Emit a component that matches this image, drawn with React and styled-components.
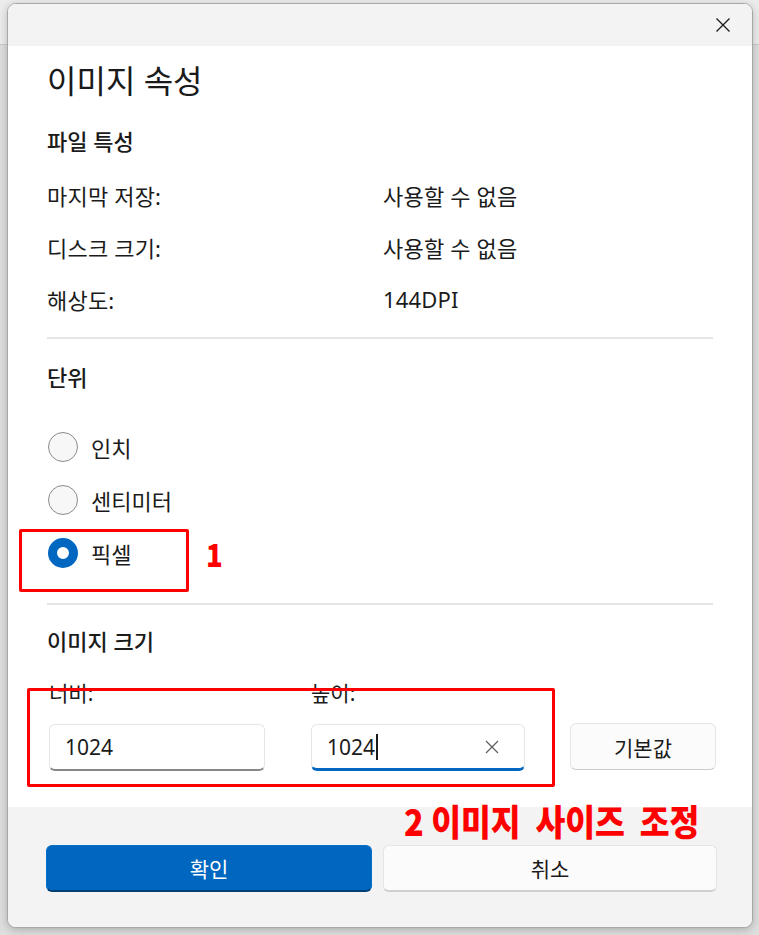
import styled, { createGlobalStyle } from "styled-components";

const GlobalStyle = createGlobalStyle`
  html, body {
    margin: 0;
    padding: 0;
    background: #dedede;
  }
  * {
    box-sizing: border-box;
  }
`;

const App = () => {
  return (
    <Page>
      <GlobalStyle />
      <BackStrip />
      <Dialog>
        <TitleBar>
          <CloseBtn aria-label="닫기">
            <svg width="16" height="16" viewBox="0 0 16 16">
              <path d="M1.5 1.5 L14.5 14.5 M14.5 1.5 L1.5 14.5" stroke="#1a1a1a" strokeWidth="1.3" fill="none" />
            </svg>
          </CloseBtn>
        </TitleBar>
        <Body>
          <Title>이미지 속성</Title>
          <SectionTitle>파일 특성</SectionTitle>
          <InfoList>
            <InfoRow>
              <div>마지막 저장:</div>
              <div>사용할 수 없음</div>
            </InfoRow>
            <InfoRow>
              <div>디스크 크기:</div>
              <div>사용할 수 없음</div>
            </InfoRow>
            <InfoRow>
              <div>해상도:</div>
              <div>144DPI</div>
            </InfoRow>
          </InfoList>
          <Divider />
          <SectionTitle $top={18}>단위</SectionTitle>
          <RadioGroup>
            <RadioRow>
              <Radio />
              <span>인치</span>
            </RadioRow>
            <RadioRow>
              <Radio />
              <span>센티미터</span>
            </RadioRow>
            <RadioRow>
              <Radio $checked />
              <span>픽셀</span>
            </RadioRow>
          </RadioGroup>
          <Divider $top={24} />
          <SectionTitle $top={16}>이미지 크기</SectionTitle>
          <SizeGrid>
            <Field>
              <FieldLabel>너비:</FieldLabel>
              <TextBox>
                <span>1024</span>
              </TextBox>
            </Field>
            <Field>
              <FieldLabel>높이:</FieldLabel>
              <TextBox $focused>
                <span>1024</span>
                <Caret />
                <ClearIcon>
                  <svg width="14" height="14" viewBox="0 0 14 14">
                    <path d="M1 1 L13 13 M13 1 L1 13" stroke="#5c5c5c" strokeWidth="1.2" fill="none" />
                  </svg>
                </ClearIcon>
              </TextBox>
            </Field>
            <DefaultBtn>기본값</DefaultBtn>
          </SizeGrid>
        </Body>
        <Footer>
          <PrimaryBtn>확인</PrimaryBtn>
          <SecondaryBtn>취소</SecondaryBtn>
        </Footer>
      </Dialog>

      <MarkBox $x={19} $y={529} $w={170} $h={63} />
      <MarkText $x={206} $y={530}>1</MarkText>
      <MarkBox $x={27} $y={688} $w={528} $h={99} />
      <MarkText $x={404} $y={797} $squeeze>2 이미지&nbsp;&nbsp;사이즈&nbsp;&nbsp;조정</MarkText>
    </Page>
  );
};

export default App;

const Page = styled.div`
  position: relative;
  width: 759px;
  height: 935px;
  padding: 3px 6px 0 7px;
  font-family: "Noto Sans", "Noto Sans CJK KR", sans-serif;
  color: #1b1b1b;
  overflow: hidden;
`;

const BackStrip = styled.div`
  position: absolute;
  left: 0;
  top: 0;
  width: 100%;
  height: 45px;
  background: #ececec;
  border-bottom: 1px solid #c9c9c9;
`;

const Dialog = styled.div`
  position: relative;
  width: 746px;
  height: 925px;
  background: #ffffff;
  border: 1px solid #a8a8a8;
  border-radius: 9px;
  box-shadow: 0 2px 8px rgba(0, 0, 0, 0.22);
  display: flex;
  flex-direction: column;
  overflow: hidden;
`;

const TitleBar = styled.div`
  height: 42px;
  background: #f3f3f3;
  display: flex;
  justify-content: flex-end;
  align-items: center;
  padding-right: 9px;
  flex-shrink: 0;
`;

const CloseBtn = styled.div`
  width: 40px;
  height: 40px;
  display: flex;
  align-items: center;
  justify-content: center;
`;

const Body = styled.div`
  flex: 1;
  padding: 15px 39px 0 39px;
  display: flex;
  flex-direction: column;
`;

const Title = styled.div`
  font-size: 32px;
  line-height: 40px;
  font-weight: 400;
  color: #1a1a1a;
`;

const SectionTitle = styled.div`
  margin-top: ${(p) => p.$top ?? 20}px;
  font-size: 22px;
  line-height: 40px;
  font-weight: 500;
`;

const InfoList = styled.div`
  margin-top: 8px;
  display: flex;
  flex-direction: column;
`;

const InfoRow = styled.div`
  display: grid;
  grid-template-columns: 336px 1fr;
  height: 52px;
  align-items: center;
  font-size: 22px;
  letter-spacing: 0.2px;
`;

const Divider = styled.div`
  margin-top: ${(p) => p.$top ?? 12}px;
  height: 2px;
  background: #e5e5e5;
`;

const RadioGroup = styled.div`
  margin-top: 23px;
  display: flex;
  flex-direction: column;
`;

const RadioRow = styled.div`
  height: 53px;
  display: flex;
  align-items: center;
  gap: 13px;
  padding-left: 1px;
  font-size: 22px;
`;

const Radio = styled.span`
  width: 30px;
  height: 30px;
  border-radius: 50%;
  flex-shrink: 0;
  background: ${(p) => (p.$checked ? "#ffffff" : "#f7f7f7")};
  border: ${(p) => (p.$checked ? "9px solid #0067c0" : "1.5px solid #8b8b8b")};
`;

const SizeGrid = styled.div`
  margin-top: 18px;
  padding-left: 2px;
  display: grid;
  grid-template-columns: 216px 214px 145px;
  column-gap: 46px;
  align-items: end;
  & > :last-child {
    margin-left: -1px;
  }
`;

const Field = styled.div`
  display: flex;
  flex-direction: column;
`;

const FieldLabel = styled.div`
  font-size: 21px;
  line-height: 28px;
  margin-bottom: 17px;
`;

const TextBox = styled.div`
  position: relative;
  height: 47px;
  display: flex;
  align-items: center;
  padding-left: 15px;
  font-size: 21px;
  background: #ffffff;
  border: 1px solid #e6e6e6;
  border-bottom: ${(p) => (p.$focused ? "3px solid #0067c0" : "2px solid #878787")};
  border-radius: 6px;
`;

const Caret = styled.span`
  width: 2px;
  height: 26px;
  background: #1a1a1a;
  margin-left: 1px;
`;

const ClearIcon = styled.span`
  margin-left: auto;
  margin-right: 25px;
  display: flex;
`;

const DefaultBtn = styled.div`
  height: 47px;
  display: flex;
  align-items: center;
  justify-content: center;
  font-size: 21px;
  background: #fbfbfb;
  border: 1px solid #e5e5e5;
  border-bottom-color: #cccccc;
  border-radius: 6px;
  margin-bottom: 1px;
`;

const Footer = styled.div`
  height: 120px;
  flex-shrink: 0;
  background: #f3f3f3;
  padding: 38px 36px 0 38px;
  display: grid;
  grid-template-columns: 326px 334px;
  column-gap: 11px;
  align-items: start;
`;

const PrimaryBtn = styled.div`
  height: 47px;
  display: flex;
  align-items: center;
  justify-content: center;
  font-size: 21px;
  color: #ffffff;
  background: #0067c0;
  border: 1px solid #0a6fc6;
  border-bottom: 2px solid #003e73;
  border-radius: 6px;
`;

const SecondaryBtn = styled.div`
  height: 47px;
  display: flex;
  align-items: center;
  justify-content: center;
  font-size: 21px;
  background: #fbfbfb;
  border: 1px solid #e5e5e5;
  border-bottom: 2px solid #d0d0d0;
  border-radius: 6px;
`;

const MarkBox = styled.div`
  position: absolute;
  left: ${(p) => p.$x}px;
  top: ${(p) => p.$y}px;
  width: ${(p) => p.$w}px;
  height: ${(p) => p.$h}px;
  border: 3px solid #ff0000;
  border-radius: 2px;
  pointer-events: none;
`;

const MarkText = styled.div`
  position: absolute;
  left: ${(p) => p.$x}px;
  top: ${(p) => p.$y}px;
  font-family: "Noto Sans CJK KR", sans-serif;
  font-size: ${(p) => (p.$squeeze ? 36 : 32)}px;
  font-weight: 900;
  line-height: 46px;
  color: #ff0000;
  white-space: nowrap;
  transform: scaleX(${(p) => (p.$squeeze ? 0.9 : 0.86)});
  transform-origin: left center;
`;
